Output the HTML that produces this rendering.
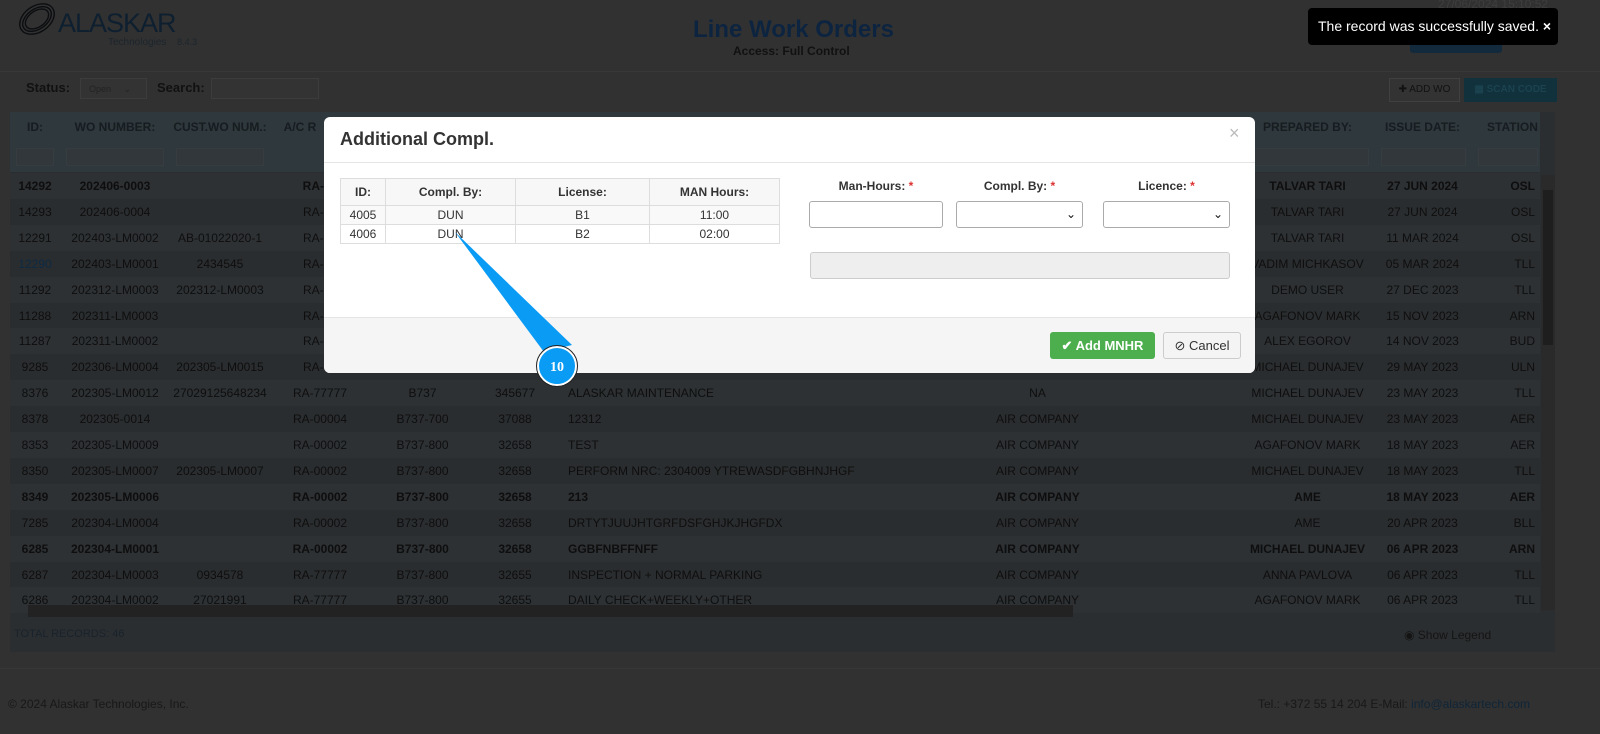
<!DOCTYPE html>
<html><head><meta charset="utf-8"><style>
*{box-sizing:border-box;margin:0;padding:0}
body{width:1600px;height:734px;overflow:hidden;background:#313131;font-family:"Liberation Sans",Arial,sans-serif;position:relative;color:#111}
.a{position:absolute}
.hdr{left:0;top:0;width:1600px;height:72px;background:#313131;border-bottom:1px solid #383838}
.tbl{left:10px;top:112px;width:1545px;height:540px;background:#2b2e30}
.row{position:absolute;left:10px;width:1530px;height:26px;font-size:12px;line-height:26px;color:#0e0e0e}
.row span{position:absolute;top:0;white-space:nowrap}
.th{position:absolute;top:112px;height:30px;line-height:30px;font-size:12px;font-weight:bold;color:#161c20;text-align:center}
.fi{position:absolute;top:148px;height:18px;background:#31373a;border:1px solid #363c3f}
.modal{left:324px;top:117px;width:931px;height:256px;background:#fff;border-radius:6px;overflow:hidden}
.mt{border-collapse:collapse;font-size:12px;color:#333}
.mt td,.mt th{border:1px solid #ddd;text-align:center}
.lbl{font-size:12px;font-weight:bold;color:#333;text-align:center}
.inp{background:#fff;border:1px solid #aaa;border-radius:3px;height:27px}
</style></head><body>
<div class="a hdr"></div>
<svg class="a" style="left:10px;top:0" width="60" height="40" viewBox="0 0 60 40"><g fill="none" stroke="#0b0d10" stroke-width="1.4"><ellipse cx="27" cy="19" rx="19" ry="13" transform="rotate(-35 27 19)"/><ellipse cx="27" cy="19" rx="16" ry="10" transform="rotate(-35 27 19)"/><ellipse cx="27" cy="19" rx="13" ry="8" transform="rotate(-35 27 19)"/></g></svg>
<div class="a" style="left:58px;top:8px;font-size:27px;color:#0e1f30;letter-spacing:-1px">ALASKAR</div>
<div class="a" style="left:108px;top:37px;font-size:10px;color:#1c252c">Technologies <span style="margin-left:8px;font-size:9px">8.4.3</span></div>
<div class="a" style="left:693px;top:16px;font-size:24px;font-weight:bold;color:#0c2440">Line Work Orders</div>
<div class="a" style="left:733px;top:44px;font-size:12px;font-weight:bold;color:#111">Access: Full Control</div>
<div class="a" style="left:1438px;top:-3px;font-size:12px;color:#3e3e3e">27/06/2024 15:10:52</div>
<div class="a" style="left:1410px;top:36px;width:92px;height:17px;background:#122a3c;border-radius:3px"></div>
<div class="a" style="left:1308px;top:8px;width:250px;height:37px;background:#000;border-radius:4px;color:#fff;font-size:14px;line-height:37px;padding-left:10px">The record was successfully saved. <b>×</b></div>
<div class="a" style="left:26px;top:80px;font-size:13px;font-weight:bold;color:#111">Status:</div>
<div class="a" style="left:80px;top:78px;width:67px;height:21px;border:1px solid #3c3c3c;background:#333;font-size:9px;color:#222;padding:5px 8px">Open &nbsp; &nbsp; ⌄</div>
<div class="a" style="left:157px;top:80px;font-size:13px;font-weight:bold;color:#111">Search:</div>
<div class="a" style="left:211px;top:78px;width:108px;height:21px;border:1px solid #3c3c3c;background:#333"></div>
<div class="a" style="left:1389px;top:78px;width:71px;height:24px;border:1px solid #404040;background:#333;font-size:10px;color:#111;line-height:22px;text-align:center">✚ ADD WO</div>
<div class="a" style="left:1464px;top:78px;width:93px;height:24px;background:#11313c;font-size:10px;color:#1b4350;line-height:24px;text-align:center;font-weight:bold">▦ SCAN CODE</div>
<div class="a tbl"></div>
<div class="a" style="left:10px;top:112px;width:1530px;height:60px;background:#2f383d"></div>
<div class="th" style="left:10px;width:50px">ID:</div>
<div class="th" style="left:60px;width:110px">WO NUMBER:</div>
<div class="th" style="left:170px;width:100px">CUST.WO NUM.:</div>
<div class="th" style="left:270px;width:60px">A/C R</div>
<div class="th" style="left:1240px;width:135px">PREPARED BY:</div>
<div class="th" style="left:1375px;width:95px">ISSUE DATE:</div>
<div class="th" style="left:1470px;width:85px">STATION</div>
<div class="fi" style="left:16px;width:38px"></div><div class="fi" style="left:66px;width:98px"></div><div class="fi" style="left:176px;width:88px"></div><div class="fi" style="left:1246px;width:123px"></div><div class="fi" style="left:1381px;width:85px"></div><div class="fi" style="left:1478px;width:60px"></div>
<div id="rows"></div>
<div class="a" style="left:1541px;top:175px;width:14px;height:435px;background:#2a2a2a"></div>
<div class="a" style="left:1543px;top:190px;width:10px;height:155px;background:#1e1e1e"></div>
<div class="a" style="left:28px;top:605px;width:1045px;height:12px;background:#222"></div>
<div class="a" style="left:14px;top:628px;font-size:11px;color:#18232d">TOTAL RECORDS: 46</div>
<div class="a" style="left:1404px;top:628px;font-size:12px;color:#141414">◉ Show Legend</div>
<div class="a" style="left:0;top:668px;width:1600px;height:1px;background:#373737"></div>
<div class="a" style="left:8px;top:697px;font-size:12px;color:#181818">© 2024 Alaskar Technologies, Inc.</div>
<div class="a" style="left:1258px;top:697px;font-size:12px;color:#181818">Tel.: +372 55 14 204 E-Mail: <span style="color:#0f2538">info@alaskartech.com</span></div>
<div class="a modal">
 <div class="a" style="left:16px;top:12px;font-size:18px;font-weight:bold;color:#333">Additional Compl.</div>
 <div class="a" style="left:905px;top:6px;font-size:18px;color:#bbb">×</div>
 <div class="a" style="left:0;top:45px;width:931px;height:1px;background:#e5e5e5"></div>
 <table class="a mt" style="left:16px;top:61px;width:440px">
  <tr style="height:27px;background:#f7f7f7"><th style="width:45px">ID:</th><th style="width:130px">Compl. By:</th><th style="width:134px">License:</th><th>MAN Hours:</th></tr>
  <tr style="height:19px;background:#f9f9f9"><td>4005</td><td>DUN</td><td>B1</td><td>11:00</td></tr>
  <tr style="height:19px"><td>4006</td><td>DUN</td><td>B2</td><td>02:00</td></tr>
 </table>
 <div class="a lbl" style="left:485px;top:62px;width:134px">Man-Hours: <span style="color:#d33">*</span></div>
 <div class="a lbl" style="left:632px;top:62px;width:127px">Compl. By: <span style="color:#d33">*</span></div>
 <div class="a lbl" style="left:779px;top:62px;width:127px">Licence: <span style="color:#d33">*</span></div>
 <div class="a inp" style="left:485px;top:84px;width:134px"></div>
 <div class="a inp" style="left:632px;top:84px;width:127px;font-size:12px;text-align:right;padding-right:6px;line-height:25px">⌄</div>
 <div class="a inp" style="left:779px;top:84px;width:127px;font-size:12px;text-align:right;padding-right:6px;line-height:25px">⌄</div>
 <div class="a" style="left:486px;top:135px;width:420px;height:27px;background:#eee;border:1px solid #ccc;border-radius:3px"></div>
 <div class="a" style="left:0;top:200px;width:931px;height:56px;background:#f5f5f5;border-top:1px solid #e5e5e5"></div>
 <div class="a" style="left:726px;top:215px;width:105px;height:27px;background:#4cae4c;border-radius:3px;color:#fff;font-size:13px;font-weight:bold;line-height:27px;text-align:center">✔ Add MNHR</div>
 <div class="a" style="left:839px;top:215px;width:78px;height:27px;background:#f4f4f4;border:1px solid #ccc;border-radius:3px;color:#333;font-size:13px;line-height:25px;text-align:center">⊘ Cancel</div>
</div>
<svg class="a" style="left:0;top:0" width="1600" height="734"><polygon points="455,232 544,352 572,345" fill="#0a9bf5"/><circle cx="557" cy="366" r="19" fill="#0a9bf5" stroke="#fff" stroke-width="2"/><circle cx="557" cy="366" r="20.5" fill="none" stroke="#222" stroke-width="1"/><text x="557" y="371" font-family="Liberation Serif,serif" font-weight="bold" font-size="14" fill="#fff" text-anchor="middle">10</text></svg>
<script>
var d=[["14292","202406-0003","","RA-00","","","","","TALVAR TARI","27 JUN 2024","OSL",1],
["14293","202406-0004","","RA-00","","","","","TALVAR TARI","27 JUN 2024","OSL"],
["12291","202403-LM0002","AB-01022020-1","RA-00","","","","","TALVAR TARI","11 MAR 2024","OSL"],
["12290","202403-LM0001","2434545","RA-00","","","","","VADIM MICHKASOV","05 MAR 2024","TLL",2],
["11292","202312-LM0003","202312-LM0003","RA-00","","","","","DEMO USER","27 DEC 2023","TLL"],
["11288","202311-LM0003","","RA-00","","","","","AGAFONOV MARK","15 NOV 2023","ARN"],
["11287","202311-LM0002","","RA-00","","","","","ALEX EGOROV","14 NOV 2023","BUD"],
["9285","202306-LM0004","202305-LM0015","RA-00","","","","","MICHAEL DUNAJEV","29 MAY 2023","ULN"],
["8376","202305-LM0012","27029125648234","RA-77777","B737","345677","ALASKAR MAINTENANCE","NA","MICHAEL DUNAJEV","23 MAY 2023","TLL"],
["8378","202305-0014","","RA-00004","B737-700","37088","12312","AIR COMPANY","MICHAEL DUNAJEV","23 MAY 2023","AER"],
["8353","202305-LM0009","","RA-00002","B737-800","32658","TEST","AIR COMPANY","AGAFONOV MARK","18 MAY 2023","AER"],
["8350","202305-LM0007","202305-LM0007","RA-00002","B737-800","32658","PERFORM NRC: 2304009 YTREWASDFGBHNJHGF","AIR COMPANY","MICHAEL DUNAJEV","18 MAY 2023","TLL"],
["8349","202305-LM0006","","RA-00002","B737-800","32658","213","AIR COMPANY","AME","18 MAY 2023","AER",1],
["7285","202304-LM0004","","RA-00002","B737-800","32658","DRTYTJUUJHTGRFDSFGHJKJHGFDX","AIR COMPANY","AME","20 APR 2023","BLL"],
["6285","202304-LM0001","","RA-00002","B737-800","32658","GGBFNBFFNFF","AIR COMPANY","MICHAEL DUNAJEV","06 APR 2023","ARN",1],
["6287","202304-LM0003","0934578","RA-77777","B737-800","32655","INSPECTION + NORMAL PARKING","AIR COMPANY","ANNA PAVLOVA","06 APR 2023","TLL"],
["6286","202304-LM0002","27021991","RA-77777","B737-800","32655","DAILY CHECK+WEEKLY+OTHER","AIR COMPANY","AGAFONOV MARK","06 APR 2023","TLL"]];
var cols=[[10,50,'c'],[60,110,'c'],[170,100,'c'],[270,100,'c'],[370,105,'c'],[475,80,'c'],[568,380,''],[960,155,'c'],[1240,135,'c'],[1375,95,'c'],[1470,65,'r']];
var h='';
d.forEach(function(r,i){var top=173+i*25.9;h+='<div class="row" style="top:'+top+'px;left:10px;background:'+(i%2?'#2a2d2f':'#2d3134')+(r[11]==1?';font-weight:bold':'')+'">';
cols.forEach(function(c,j){var st='left:'+(c[0]-10)+'px;width:'+c[1]+'px;'+(c[2]=='c'?'text-align:center;':c[2]=='r'?'text-align:right;':'')+(j==0&&r[11]==2?'color:#0d2a44;':'');
h+='<span style="'+st+'">'+r[j]+'</span>';});h+='</div>';});
document.getElementById('rows').innerHTML=h;
</script>
</body></html>
